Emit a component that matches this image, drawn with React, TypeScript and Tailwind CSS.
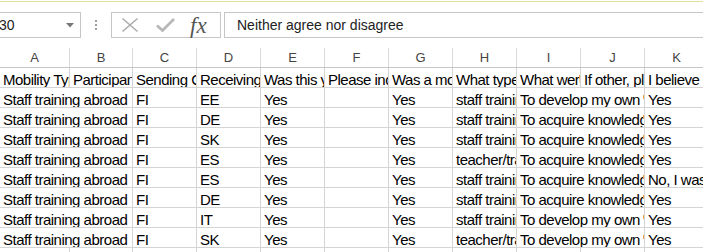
import React from 'react';

const COLS = [70, 63, 64, 64, 64, 64, 64, 64, 64, 64, 64];
const LETTERS = ['A', 'B', 'C', 'D', 'E', 'F', 'G', 'H', 'I', 'J', 'K'];

type Cell = { t: string; span?: number; mark?: boolean };

const headerRow: Cell[] = [
  { t: 'Mobility Type' },
  { t: 'Participant' },
  { t: 'Sending Country' },
  { t: 'Receiving Country' },
  { t: 'Was this your' },
  { t: 'Please indicate' },
  { t: 'Was a mobility' },
  { t: 'What type of' },
  { t: 'What were', mark: true },
  { t: 'If other, please' },
  { t: 'I believe' },
];

const data = [
  ['EE', 'staff training', 'To develop my own', 'Yes'],
  ['DE', 'staff training', 'To acquire knowledge', 'Yes'],
  ['SK', 'staff training', 'To acquire knowledge', 'Yes'],
  ['ES', 'teacher/trainer', 'To acquire knowledge', 'Yes'],
  ['ES', 'staff training', 'To acquire knowledge', 'No, I was'],
  ['DE', 'staff training', 'To acquire knowledge', 'Yes'],
  ['IT', 'staff training', 'To develop my own', 'Yes'],
  ['SK', 'teacher/trainer', 'To develop my own', 'Yes'],
];

const dataRows: Cell[][] = data.map(([country, type, why, believe]) => [
  { t: 'Staff training abroad', span: 2 },
  { t: 'FI' },
  { t: country },
  { t: 'Yes' },
  { t: '' },
  { t: 'Yes' },
  { t: type },
  { t: why, span: 2, mark: true },
  { t: believe },
]);

const emptyRow: Cell[] = LETTERS.map(() => ({ t: '' }));

function Row({ cells }: { cells: Cell[] }) {
  let col = 0;
  return (
    <div className="flex h-[20px]">
      {cells.map((c, i) => {
        const span = c.span ?? 1;
        const w = COLS.slice(col, col + span).reduce((a, b) => a + b, 0);
        col += span;
        return (
          <div
            key={i}
            style={{ width: w }}
            className="relative h-[20px] shrink-0 overflow-hidden whitespace-nowrap border-b border-r border-[#d4d4d4] pl-[3px] pt-[1.5px] text-[15px] leading-[19px] tracking-[-0.5px] text-black"
          >
            {c.t}
            {c.mark && c.t && (
              <span className="absolute right-0 top-[7px] h-[4px] w-[1px] bg-[#f0a040]" />
            )}
          </div>
        );
      })}
    </div>
  );
}

export default function App() {
  return (
    <div
      className="h-[252px] w-[703px] overflow-hidden bg-white"
      style={{ fontFamily: '"Liberation Sans", Arial, sans-serif' }}
    >
      <div className="h-[2px] border-b border-[#e6e0a0]" />

      <div className="mt-[10px] flex h-[26px]">
        <div className="flex w-[81px] shrink-0 items-center justify-between border-y border-r border-[#c6c6c6] pr-[6px] text-[14px] text-[#222]">
          <span className="-ml-[1px]">30</span>
          <svg width="8" height="5" viewBox="0 0 8 5">
            <path d="M0 0 L8 0 L4 4.5 Z" fill="#777" />
          </svg>
        </div>
        <div className="flex w-[30px] shrink-0 flex-col items-center justify-center gap-[2px]">
          <span className="h-[2px] w-[2px] bg-[#a0a0a0]" />
          <span className="h-[2px] w-[2px] bg-[#a0a0a0]" />
          <span className="h-[2px] w-[2px] bg-[#a0a0a0]" />
        </div>
        <div className="flex w-[110px] shrink-0 items-center border border-[#c6c6c6]">
          <svg className="ml-[9px]" width="18" height="16" viewBox="0 0 18 16">
            <path d="M1.5 1.5 L16.5 14.5 M16.5 1.5 L1.5 14.5" stroke="#acacac" strokeWidth="1.6" fill="none" />
          </svg>
          <svg className="ml-[17px]" width="19" height="14" viewBox="0 0 19 14">
            <path d="M1 7.5 L6.5 12.5 L18 1" stroke="#b8b8b8" strokeWidth="2.8" fill="none" />
          </svg>
          <span
            className="ml-[15px] text-[23px] italic leading-none text-[#555]"
            style={{ fontFamily: '"Liberation Serif", "Times New Roman", serif' }}
          >
            fx
          </span>
        </div>
        <div className="ml-[3px] flex flex-1 items-center border-y border-l border-[#c6c6c6] pl-[12px] text-[14px] text-[#222]">
          Neither agree nor disagree
        </div>
      </div>

      <div className="mt-[10px] flex h-[20px] border-b border-[#c6c6c6]">
        {LETTERS.map((l, i) => (
          <div
            key={l}
            style={{ width: COLS[i] }}
            className="flex shrink-0 items-center justify-center border-r border-[#dadada] text-[13px] text-[#444]"
          >
            {l}
          </div>
        ))}
      </div>

      <Row cells={headerRow} />
      {dataRows.map((r, i) => (
        <Row key={i} cells={r} />
      ))}
      <Row cells={emptyRow} />
    </div>
  );
}
